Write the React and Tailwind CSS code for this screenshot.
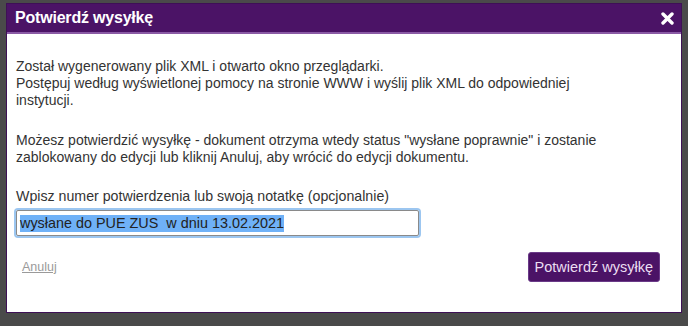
export default function App() {
  return (
    <div className="w-[688px] h-[326px] bg-[#4a4a4a] pt-[3px] pl-[6px]" style={{ fontFamily: '"Liberation Sans", Arial, sans-serif' }}>
      <div className="w-[676px] h-[310px] bg-white border border-[#3e1056] flex flex-col">
        <div className="h-[30px] bg-[#4b1366] border-b-2 border-[#8a5aa5] flex items-center justify-between pl-[8px] pr-[7px]">
          <span className="text-white font-bold text-[16px] tracking-[-0.2px]">Potwierdź wysyłkę</span>
          <svg width="13" height="13" viewBox="0 0 13 13" className="mt-[1px]">
            <path d="M2 2 L11 11 M11 2 L2 11" stroke="white" strokeWidth="3.4" strokeLinecap="round" />
          </svg>
        </div>
        <div className="pl-[9px] pr-[10px] pt-[24px] text-[14px] leading-[17px] text-[#333]">
          <p className="max-w-[600px]">
            Został wygenerowany plik XML i otwarto okno przeglądarki.
            <br />
            Postępuj według wyświetlonej pomocy na stronie WWW i wyślij plik XML do odpowiedniej instytucji.
          </p>
          <p className="mt-[23px] max-w-[600px]">
            Możesz potwierdzić wysyłkę - dokument otrzyma wtedy status "wysłane poprawnie" i zostanie zablokowany do edycji lub kliknij Anuluj, aby wrócić do edycji dokumentu.
          </p>
          <p className="mt-[22px] text-[14.2px]">Wpisz numer potwierdzenia lub swoją notatkę (opcjonalnie)</p>
          <div className="mt-[5px] w-[403px] h-[26px] border border-[#8a8a8a] rounded-[2px] shadow-[0_0_0_2px_#9cc6f0] flex items-center pl-[3px]">
            <span className="bg-[#6fb1f7] text-[#222] text-[14.4px] leading-[17px] whitespace-pre">wysłane do PUE ZUS  w dniu 13.02.2021</span>
          </div>
          <div className="mt-[16px] flex items-center justify-between pr-[11px]">
            <a className="ml-[6px] text-[12.5px] text-[#9a9a9a] underline">Anuluj</a>
            <button className="h-[30px] px-[6px] bg-[#4b1366] rounded-[3px] text-[#ecdff2] text-[14.5px] border border-[#6a3a88]">Potwierdź wysyłkę</button>
          </div>
        </div>
      </div>
    </div>
  );
}
